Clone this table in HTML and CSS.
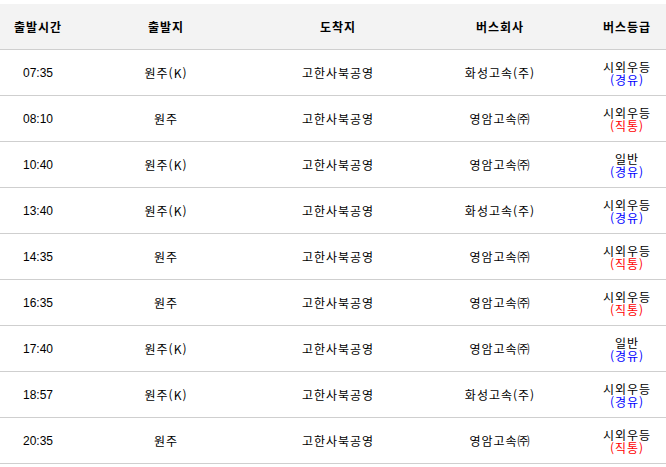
FILE: index.html
```html
<!DOCTYPE html>
<html lang="ko">
<head>
<meta charset="utf-8">
<link rel="stylesheet" href="styles.css">
</head>
<body>
<div class="wrap">
  <div class="tbl">
    <div class="row head"><div>출발시간</div><div>출발지</div><div>도착지</div><div>버스회사</div><div>버스등급</div></div>
    <div class="row"><div class="num">07:35</div><div>원주(K)</div><div>고한사북공영</div><div>화성고속(주)</div><div class="grade"><span>시외우등</span><span class="via">(경유)</span></div></div>
    <div class="row"><div class="num">08:10</div><div>원주</div><div>고한사북공영</div><div>영암고속㈜</div><div class="grade"><span>시외우등</span><span class="direct">(직통)</span></div></div>
    <div class="row"><div class="num">10:40</div><div>원주(K)</div><div>고한사북공영</div><div>영암고속㈜</div><div class="grade"><span>일반</span><span class="via">(경유)</span></div></div>
    <div class="row"><div class="num">13:40</div><div>원주(K)</div><div>고한사북공영</div><div>화성고속(주)</div><div class="grade"><span>시외우등</span><span class="via">(경유)</span></div></div>
    <div class="row"><div class="num">14:35</div><div>원주</div><div>고한사북공영</div><div>영암고속㈜</div><div class="grade"><span>시외우등</span><span class="direct">(직통)</span></div></div>
    <div class="row"><div class="num">16:35</div><div>원주</div><div>고한사북공영</div><div>영암고속㈜</div><div class="grade"><span>시외우등</span><span class="direct">(직통)</span></div></div>
    <div class="row"><div class="num">17:40</div><div>원주(K)</div><div>고한사북공영</div><div>영암고속㈜</div><div class="grade"><span>일반</span><span class="via">(경유)</span></div></div>
    <div class="row"><div class="num">18:57</div><div>원주(K)</div><div>고한사북공영</div><div>화성고속(주)</div><div class="grade"><span>시외우등</span><span class="via">(경유)</span></div></div>
    <div class="row"><div class="num">20:35</div><div>원주</div><div>고한사북공영</div><div>영암고속㈜</div><div class="grade"><span>시외우등</span><span class="direct">(직통)</span></div></div>
  </div>
</div>
</body>
</html>
```

FILE: styles.css
```css
html, body {
  margin: 0;
  padding: 0;
  background: #fff;
  overflow: hidden;
}
.wrap {
  padding-top: 4px;
  width: 666px;
  overflow: hidden;
}
.tbl {
  width: 674px;
  font-family: "Noto Sans CJK KR", "Noto Sans", sans-serif;
  font-size: 12px;
  color: #000;
}
.row {
  display: grid;
  grid-template-columns: 76px 180px 164px 160px 94px;
  height: 45px;
  border-bottom: 1px solid #cfcfcf;
  align-items: center;
  text-align: center;
  letter-spacing: 1px;
  line-height: 14px;
}
.row.head {
  background: #f3f3f3;
  font-weight: bold;
}
.num {
  letter-spacing: 0;
  font-family: "Liberation Sans", "DejaVu Sans", sans-serif;
}
.grade {
  display: flex;
  flex-direction: column;
  align-items: center;
  line-height: 13px;
  padding-top: 1px;
}
.via { color: #0000ff; }
.direct { color: #ff0000; }
```
